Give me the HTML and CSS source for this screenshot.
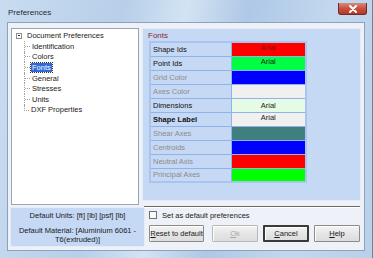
FILE: index.html
```html
<!DOCTYPE html>
<html lang="en">
<head>
  <meta charset="UTF-8">
  <title>Preferences</title>
  <link rel="stylesheet" href="styles.css">
</head>
<body>
  <div class="window">
    <div class="titlebar">
      <span class="title">Preferences</span>
      <span class="close-btn">
        <svg width="10" height="8" viewBox="0 0 10 8">
          <path d="M2 1 L8 7 M8 1 L2 7" stroke="#fff" stroke-width="2" stroke-linecap="round"/>
        </svg>
      </span>
    </div>

    <div class="client">
      <div class="top-row">
        <div class="tree">
          <div class="tree-root">
            <span class="expander"></span>
            <span>Document Preferences</span>
          </div>
          <ul class="tree-children">
            <li><span class="tick"></span><span class="node">Identification</span></li>
            <li><span class="tick"></span><span class="node">Colors</span></li>
            <li><span class="tick"></span><span class="node selected">Fonts</span></li>
            <li><span class="tick"></span><span class="node">General</span></li>
            <li><span class="tick"></span><span class="node">Stresses</span></li>
            <li><span class="tick"></span><span class="node">Units</span></li>
            <li><span class="tick"></span><span class="node">DXF Properties</span></li>
          </ul>
        </div>

        <div class="panel">
          <div class="panel-title">Fonts</div>
          <table class="prop-grid">
            <tr><td class="label">Shape Ids</td><td class="value red dark-red-text">Arial</td></tr>
            <tr><td class="label">Point Ids</td><td class="value green">Arial</td></tr>
            <tr><td class="label muted">Grid Color</td><td class="value blue"></td></tr>
            <tr><td class="label muted">Axes Color</td><td class="value grey"></td></tr>
            <tr><td class="label">Dimensions</td><td class="value pale-green low">Arial</td></tr>
            <tr><td class="label bold">Shape Label</td><td class="value grey">Arial</td></tr>
            <tr><td class="label muted">Shear Axes</td><td class="value teal"></td></tr>
            <tr><td class="label muted">Centroids</td><td class="value blue"></td></tr>
            <tr><td class="label muted">Neutral Axis</td><td class="value red"></td></tr>
            <tr><td class="label muted">Principal Axes</td><td class="value bright-green"></td></tr>
          </table>
        </div>
      </div>

      <div class="bottom-row">
        <div class="defaults-box">
          <p>Default Units: [ft] [lb] [psf] [lb]</p>
          <p>Default Material: [Aluminium 6061 -<br>T6(extruded)]</p>
        </div>

        <div class="controls">
          <div class="separator"></div>
          <label class="default-check">
            <span class="checkbox"></span>
            Set as default preferences
          </label>
          <div class="buttons">
            <button class="btn reset"><u>R</u>eset to default</button>
            <button class="btn" disabled><u>O</u>k</button>
            <button class="btn default"><u>C</u>ancel</button>
            <button class="btn"><u>H</u>elp</button>
          </div>
        </div>
      </div>
    </div>
  </div>
</body>
</html>
```

FILE: styles.css
```css
* {
  margin: 0;
  padding: 0;
  box-sizing: border-box;
}

body {
  width: 373px;
  height: 258px;
  overflow: hidden;
  font-family: "Liberation Sans", Arial, sans-serif;
  font-size: 7.5px;
  color: #1a1a1a;
  background: #fff;
}

.window {
  width: 373px;
  height: 258px;
  display: flex;
  flex-direction: column;
  background: linear-gradient(100deg, #c9dcf0 0%, #b7cfe9 30%, #d3e3f3 45%, #aec8e6 60%, #c3d8ee 80%, #b9d0ea 100%);
  padding: 0 7px 7px 7px;
  border-right: 1px solid #6f8296;
}

.titlebar {
  height: 22px;
  display: flex;
  align-items: flex-start;
  justify-content: space-between;
}

.title {
  margin-top: 8px;
  margin-left: 1px;
  font-size: 8px;
  color: #1e2a38;
}

.close-btn {
  width: 29px;
  height: 12px;
  margin-top: 3px;
  margin-right: -2px;
  display: flex;
  align-items: center;
  justify-content: center;
  background: linear-gradient(180deg, #d88a7c 0%, #c8503f 50%, #b8362a 100%);
  border: 1px solid #6e2c25;
  border-top: none;
  border-radius: 0 0 3px 3px;
}

.client {
  flex: 1;
  background: #eef2f8;
  border: 1px solid #8ba2bc;
  display: flex;
  flex-direction: column;
}

.top-row {
  display: flex;
  padding: 5px 0 0 3px;
  gap: 3px;
}

.tree {
  width: 128px;
  height: 177px;
  background: #fff;
  border: 1px solid #9ca6b2;
  padding: 1px 0 0 4px;
}

.tree-root {
  display: flex;
  align-items: center;
  height: 11px;
  gap: 5px;
}

.expander {
  width: 6px;
  height: 6px;
  border: 1px solid #8e8e8e;
  position: relative;
  background: #fff;
}

.expander::after {
  content: '';
  position: absolute;
  left: 1px;
  top: 1.5px;
  width: 2px;
  height: 1px;
  background: #333;
}

.tree-children {
  list-style: none;
  margin-left: 8px;
}

.tree-children li {
  display: flex;
  align-items: center;
  height: 10.6px;
  border-left: 1px dotted #a0a0a0;
}

.tree-children li:last-child {
  border-left: none;
}

.tick {
  width: 5px;
  height: 1px;
  border-top: 1px dotted #a0a0a0;
  margin-right: 1px;
}

.tree-children li:last-child .tick {
  align-self: flex-start;
  height: 6px;
  border-top: none;
  border-left: 1px dotted #a0a0a0;
  border-bottom: 1px dotted #a0a0a0;
}

.node {
  padding: 0 1px;
  line-height: 9px;
}

.node.selected {
  background: #2f6ad8;
  color: #fff;
  outline: 1px dotted #333;
}

.panel {
  width: 219px;
  height: 173px;
  background: #c5d8f4;
  border: 1px solid #e4ecf8;
  padding: 2px 0 0 5px;
}

.panel-title {
  color: #8a2a2a;
  font-size: 8px;
  height: 10px;
}

.prop-grid {
  border-collapse: collapse;
  border: 2px solid #a9c4ee;
  margin-left: 1px;
}

.prop-grid td {
  height: 14px;
  border: 1px solid #8fb2e8;
  padding: 0 2px;
  vertical-align: middle;
}

.prop-grid .label {
  width: 81px;
  color: #111;
}

.prop-grid .label.muted {
  color: #8c8c8c;
}

.prop-grid .label.bold {
  font-weight: bold;
}

.prop-grid .value {
  width: 75px;
  text-align: center;
  vertical-align: top;
  line-height: 9px;
}

.prop-grid .value.low {
  vertical-align: middle;
}

.red { background: #ff0000; }
.dark-red-text { color: #8a1010; }
.green { background: #00ff44; }
.bright-green { background: #00ff00; }
.blue { background: #0000ff; }
.grey { background: #f0f0f0; }
.pale-green { background: #e6fbe6; }
.teal { background: #3f7f7f; }

.bottom-row {
  display: flex;
  flex: 1;
  padding-left: 2px;
}

.defaults-box {
  width: 135px;
  height: 40px;
  margin-top: 2px;
  background: #c5d8f4;
  border: 1px solid #e4ecf8;
  text-align: center;
  padding-top: 3px;
  line-height: 9.5px;
}

.defaults-box p + p {
  margin-top: 5px;
}

.controls {
  flex: 1;
  display: flex;
  flex-direction: column;
  padding-right: 4px;
}

.separator {
  height: 2px;
  margin-top: 1px;
  margin-left: -1px;
  border-top: 1px solid #6a6a6a;
  border-bottom: 1px solid #fff;
}

.default-check {
  display: flex;
  align-items: center;
  gap: 5px;
  margin: 2px 0 0 4px;
  height: 10px;
}

.checkbox {
  width: 8px;
  height: 8px;
  border: 1px solid #6f6f6f;
  background: #fbfbfb;
}

.buttons {
  display: flex;
  gap: 5px;
  margin: 5px 0 0 4px;
}

.btn {
  width: 46px;
  height: 17px;
  font-family: "Liberation Sans", Arial, sans-serif;
  font-size: 7.5px;
  color: #1a1a1a;
  background: linear-gradient(180deg, #f4f4f4 0%, #e6e6e6 50%, #dcdcdc 100%);
  border: 1px solid #8a8a8a;
  border-radius: 1px;
  box-shadow: inset 1px 1px 0 #fff;
}

.btn.reset {
  width: 55px;
  margin-right: 3px;
}

.btn:disabled {
  color: #a8a8a8;
  border-color: #b8b8b8;
}

.btn.default {
  border: 2px solid #3a3a3a;
}
```
